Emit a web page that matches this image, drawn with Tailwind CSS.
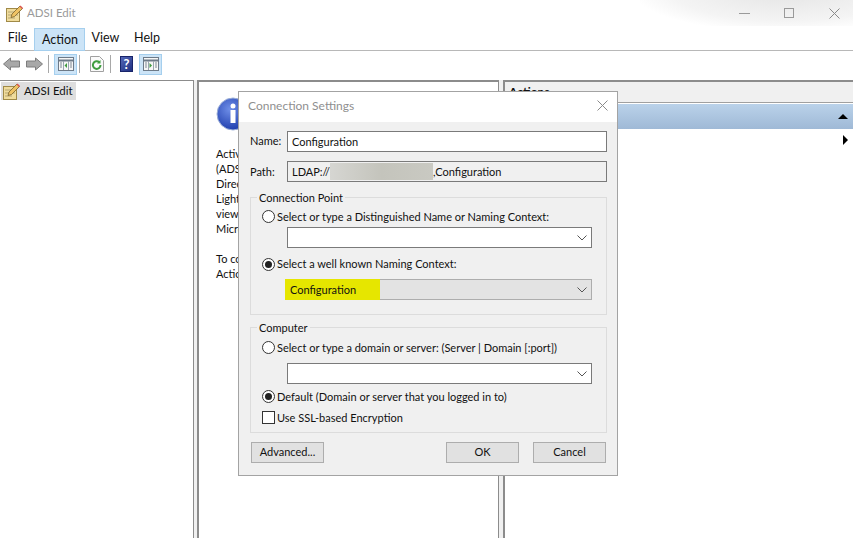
<!DOCTYPE html>
<html>
<head>
<meta charset="utf-8">
<script src="https://cdn.jsdelivr.net/npm/@tailwindcss/browser@4"></script>
</head>
<body class="w-[853px] h-[538px] overflow-hidden relative bg-white font-['Lato',sans-serif] text-[11px] text-[#111]">
<div class="flex flex-col h-[538px]">
  <!-- title bar -->
  <div class="h-[26px] flex items-center relative overflow-hidden shrink-0">
    <div class="absolute left-[640px] top-[-50px] w-[290px] h-[80px] bg-[radial-gradient(ellipse_at_center,#e4e4e4_0%,#f4f4f4_55%,#ffffff_75%)]"></div>
    <svg class="ml-[5px] mt-[-1px] relative" width="18" height="18" viewBox="0 0 18 18"><rect x="1.500" y="4.500" width="13" height="13" fill="#f0dc9c" stroke="#a08a48"/><path d="M3 8h10M3 11h10M3 14h7" stroke="#b5a677"/><path d="M6 13.500l1-3.500 8-8 2.500 2.500-8 8z" fill="#eec264" stroke="#6f5620" stroke-width=".7"/><path d="M14.500 2.500l2.500 2.500 1-1-2.500-2.500z" fill="#d9534f"/></svg>
    <span class="ml-[4px] relative text-[11.5px] text-[#9a9a9a]">ADSI Edit</span>
    <div class="ml-auto flex items-center relative">
      <div class="w-[11px] h-px bg-[#9a9a9a]"></div>
      <div class="ml-[34px] w-[10px] h-[10px] border border-[#9a9a9a]"></div>
      <svg class="ml-[35px] mr-[13px]" width="11" height="11" viewBox="0 0 11 11"><path d="M.5.5l10 10M10.500.5l-10 10" stroke="#8a8a8a" fill="none"/></svg>
    </div>
  </div>
  <!-- menu -->
  <div class="h-[25px] flex items-stretch border-b border-[#b8b8b8] shrink-0 pl-[1px] text-[12.5px]">
    <div class="w-[33px] flex items-center justify-center">File</div>
    <div class="w-[51px] h-[23px] mt-[2px] flex items-center justify-center bg-[#cce4f7] border border-[#a5cfee] pl-[1px] pt-[1px]">Action</div>
    <div class="w-[41px] flex items-center justify-center">View</div>
    <div class="w-[41px] flex items-center justify-center pl-[1px]">Help</div>
  </div>
  <!-- toolbar -->
  <div class="h-[29px] pb-[3px] flex items-center shrink-0 pl-[3px]">
    <svg width="17" height="14" viewBox="0 0 17 14"><path d="M.5 7L7.500 1v3h9v6h-9v3z" fill="#a8a8a8" stroke="#7d7d7d"/></svg>
    <svg class="ml-[6px]" width="17" height="14" viewBox="0 0 17 14"><path d="M16.500 7L9.500 1v3h-9v6h9v3z" fill="#a8a8a8" stroke="#7d7d7d"/></svg>
    <div class="ml-[5px] w-px h-[18px] bg-[#a8a8a8]"></div>
    <div class="ml-[5px] w-[23px] h-[21px] bg-[#cce4f7] border border-[#a5cfee] flex items-center justify-center">
      <svg width="16" height="14" viewBox="0 0 16 14"><rect x=".5" y=".5" width="15" height="13" fill="#f6f6f6" stroke="#6d7a88"/><path d="M.5 3.500h15" stroke="#6d7a88" stroke-width="2"/><path d="M5.500 4v9M10.500 4v9" stroke="#9aa5b0"/><path d="M2 6h2M2 8h2M2 10h2M12 6h2M12 8h2M12 10h2" stroke="#7d8894"/><path d="M9 6v5L6.500 8.500z" fill="#3d9a3d"/></svg>
    </div>
    <div class="ml-[2px] w-px h-[18px] bg-[#a8a8a8]"></div>
    <svg class="ml-[10px]" width="14" height="16" viewBox="0 0 14 16"><path d="M.5.500h9l4 4v11H.5z" fill="#fafafa" stroke="#a0a0a0"/><path d="M10.500 9a3.800 3.800 0 1 1-1.200-2.700" fill="none" stroke="#3f9d3f" stroke-width="2"/><path d="M10.500 4v3.500H7z" fill="#3f9d3f"/></svg>
    <div class="ml-[6px] w-px h-[18px] bg-[#a8a8a8]"></div>
    <div class="ml-[9px] w-[13px] h-[16px] bg-[linear-gradient(135deg,#5468b8,#1f2f80)] border border-[#18246a] flex items-center justify-center text-white font-bold text-[13px] leading-none">?</div>
    <div class="ml-[6px] w-[23px] h-[21px] bg-[#cce4f7] border border-[#a5cfee] flex items-center justify-center">
      <svg width="16" height="14" viewBox="0 0 16 14"><rect x=".5" y=".5" width="15" height="13" fill="#f6f6f6" stroke="#6d7a88"/><path d="M.5 3.500h15" stroke="#6d7a88" stroke-width="2"/><path d="M5.500 4v9M10.500 4v9" stroke="#9aa5b0"/><path d="M2 6h2M2 8h2M2 10h2M12 6h2M12 8h2M12 10h2" stroke="#7d8894"/><path d="M6.500 6v5L9 8.500z" fill="#3d9a3d"/></svg>
    </div>
  </div>
  <!-- panes -->
  <div class="flex-1 flex bg-[#f0f0f0] min-h-0">
    <div class="w-[194px] border-t border-r border-[#8c8c8c] bg-white pt-[1px] pl-[1px]">
      <div class="w-[75px] h-[18px] bg-[#dedede] flex items-center">
        <svg class="ml-[1px] shrink-0" width="18" height="18" viewBox="0 0 18 18"><rect x="1.500" y="4.500" width="13" height="13" fill="#f0dc9c" stroke="#a08a48"/><path d="M3 8h10M3 11h10M3 14h7" stroke="#b5a677"/><path d="M6 13.500l1-3.500 8-8 2.500 2.500-8 8z" fill="#eec264" stroke="#6f5620" stroke-width=".7"/><path d="M14.500 2.500l2.500 2.500 1-1-2.500-2.500z" fill="#d9534f"/></svg>
        <span class="ml-[4px] text-[11.5px] whitespace-nowrap">ADSI Edit</span>
      </div>
    </div>
    <div class="ml-[3px] w-[302px] border-t-2 border-l-2 border-r border-[#8c8c8c] bg-white pl-[17px] pt-[15px] overflow-hidden">
      <svg width="34" height="34" viewBox="0 0 34 34"><defs><radialGradient id="b" cx=".4" cy=".35" r=".75"><stop offset="0" stop-color="#6f8fe8"/><stop offset="1" stop-color="#1534a6"/></radialGradient></defs><circle cx="17" cy="17" r="16" fill="url(#b)" stroke="#9db0d8"/><circle cx="17" cy="9" r="2.500" fill="#fff"/><rect x="14.500" y="13" width="5" height="13" fill="#fff"/></svg>
      <div class="mt-[15px] leading-[15px] whitespace-nowrap">
        <div>Active</div><div>(ADSI</div><div>Directory</div><div>Light</div><div>view</div><div>Microsoft</div>
        <div class="mt-[15px]">To connect</div><div>Action</div>
      </div>
    </div>
    <div class="ml-[4px] flex-1 border-t-2 border-l-2 border-[#8c8c8c] bg-white flex flex-col">
      <div class="h-[21px] bg-[#f0f0f0] border-b border-[#a0a0a0] pl-[4px] font-bold text-[12px] leading-[20px]">Actions</div>
      <div class="mt-[1px] h-[25px] bg-[linear-gradient(#bad2ea,#9fb9d6)] flex items-center justify-end pr-[5px]">
        <div class="w-0 h-0 border-l-[5px] border-r-[5px] border-b-[5px] border-l-transparent border-r-transparent border-b-black"></div>
      </div>
      <div class="flex justify-end pr-[5px] mt-[6px]">
        <div class="w-0 h-0 border-t-[5px] border-b-[5px] border-l-[5px] border-t-transparent border-b-transparent border-l-black"></div>
      </div>
    </div>
  </div>
</div>

<!-- dialog -->
<div class="absolute left-[238px] top-[91px] w-[380px] h-[385px] bg-[#f0f0f0] border border-[#a3a3a3] flex flex-col">
  <div class="h-[30px] bg-white flex items-center justify-between pl-[9px] pr-[9px] shrink-0">
    <span class="text-[12px] text-[#8f8f8f] mt-[-2px]">Connection Settings</span>
    <svg class="mt-[-3px]" width="11" height="11" viewBox="0 0 11 11"><path d="M.5.500l10 10M10.500.500l-10 10" stroke="#8a8a8a" fill="none"/></svg>
  </div>
  <div class="flex flex-col pl-[11px] pr-[10px] pt-[9px]">
    <div class="flex items-center h-[21px]">
      <span class="w-[37px]">Name:</span>
      <div class="flex-1 h-[21px] bg-white border border-[#7a7a7a] px-[4px] pt-[2px] flex items-center">Configuration</div>
    </div>
    <div class="flex items-center h-[21px] mt-[9px]">
      <span class="w-[37px] mt-[2px]">Path:</span>
      <div class="flex-1 h-[21px] bg-[#f0f0f0] border border-[#7a7a7a] px-[4px] flex items-center whitespace-nowrap">
        <span class="mt-[2px]">LDAP://</span><span class="w-[103px] h-[17px] bg-[linear-gradient(90deg,#d6d6d2,#c4c4bc_50%,#c9c9c2)]"></span><span class="mt-[2px]">,Configuration</span>
      </div>
    </div>
    <!-- Connection Point -->
    <div class="relative mt-[15px] h-[118px] border border-[#dcdcdc] pt-[11px] pl-[11px] pr-[14px] flex flex-col">
      <span class="absolute left-[6px] top-[-7px] bg-[#f0f0f0] px-[2px] leading-[13px]">Connection Point</span>
      <div class="flex items-center h-[15px]">
        <span class="w-[13px] h-[13px] rounded-full border border-[#333] bg-white shrink-0"></span>
        <span class="ml-[2px] mt-[2px]">Select or type a Distinguished Name or Naming Context:</span>
      </div>
      <div class="ml-[25px] mt-[3px] h-[21px] bg-white border border-[#7a7a7a] flex items-center justify-end pr-[4px]">
        <svg width="10" height="6" viewBox="0 0 10 6"><path d="M.5.500L5 5l4.500-4.500" fill="none" stroke="#555"/></svg>
      </div>
      <div class="flex items-center h-[15px] mt-[9px]">
        <span class="w-[13px] h-[13px] rounded-full border border-[#333] bg-white shrink-0 flex items-center justify-center"><span class="w-[7px] h-[7px] rounded-full bg-[#222]"></span></span>
        <span class="ml-[2px]">Select a well known Naming Context:</span>
      </div>
      <div class="ml-[25px] mt-[7px] h-[21px] bg-[#e3e3e3] border border-[#adadad] flex items-center justify-between pr-[4px] relative">
        <span class="w-[95px] h-[21px] ml-[-3px] bg-[#e6e600] pl-[5px] pt-[2px] flex items-center">Configuration</span>
        <svg width="10" height="6" viewBox="0 0 10 6"><path d="M.5.500L5 5l4.500-4.500" fill="none" stroke="#555"/></svg>
      </div>
    </div>
    <!-- Computer -->
    <div class="relative mt-[12px] h-[106px] border border-[#dcdcdc] pt-[12px] pl-[11px] pr-[14px] flex flex-col">
      <span class="absolute left-[6px] top-[-7px] bg-[#f0f0f0] px-[2px] leading-[13px]">Computer</span>
      <div class="flex items-center h-[15px]">
        <span class="w-[13px] h-[13px] rounded-full border border-[#333] bg-white shrink-0"></span>
        <span class="ml-[2px] mt-[2px] whitespace-nowrap">Select or type a domain or server: (Server | Domain [:port])</span>
      </div>
      <div class="ml-[25px] mt-[8px] h-[21px] bg-white border border-[#7a7a7a] flex items-center justify-end pr-[4px]">
        <svg width="10" height="6" viewBox="0 0 10 6"><path d="M.5.500L5 5l4.500-4.500" fill="none" stroke="#555"/></svg>
      </div>
      <div class="flex items-center h-[15px] mt-[5px]">
        <span class="w-[13px] h-[13px] rounded-full border border-[#333] bg-white shrink-0 flex items-center justify-center"><span class="w-[7px] h-[7px] rounded-full bg-[#222]"></span></span>
        <span class="ml-[2px] mt-[2px]">Default (Domain or server that you logged in to)</span>
      </div>
      <div class="flex items-center h-[15px] mt-[6px]">
        <span class="w-[13px] h-[13px] border border-[#333] bg-white shrink-0"></span>
        <span class="ml-[2px] mt-[2px]">Use SSL-based Encryption</span>
      </div>
    </div>
    <!-- buttons -->
    <div class="flex mt-[9px] h-[21px] pl-[1px] pr-[1px]">
      <div class="w-[73px] bg-[#e1e1e1] border border-[#adadad] flex items-center justify-center">Advanced...</div>
      <div class="ml-auto w-[73px] bg-[#e1e1e1] border border-[#adadad] flex items-center justify-center">OK</div>
      <div class="ml-[14px] w-[73px] bg-[#e1e1e1] border border-[#adadad] flex items-center justify-center">Cancel</div>
    </div>
  </div>
</div>
</body>
</html>
